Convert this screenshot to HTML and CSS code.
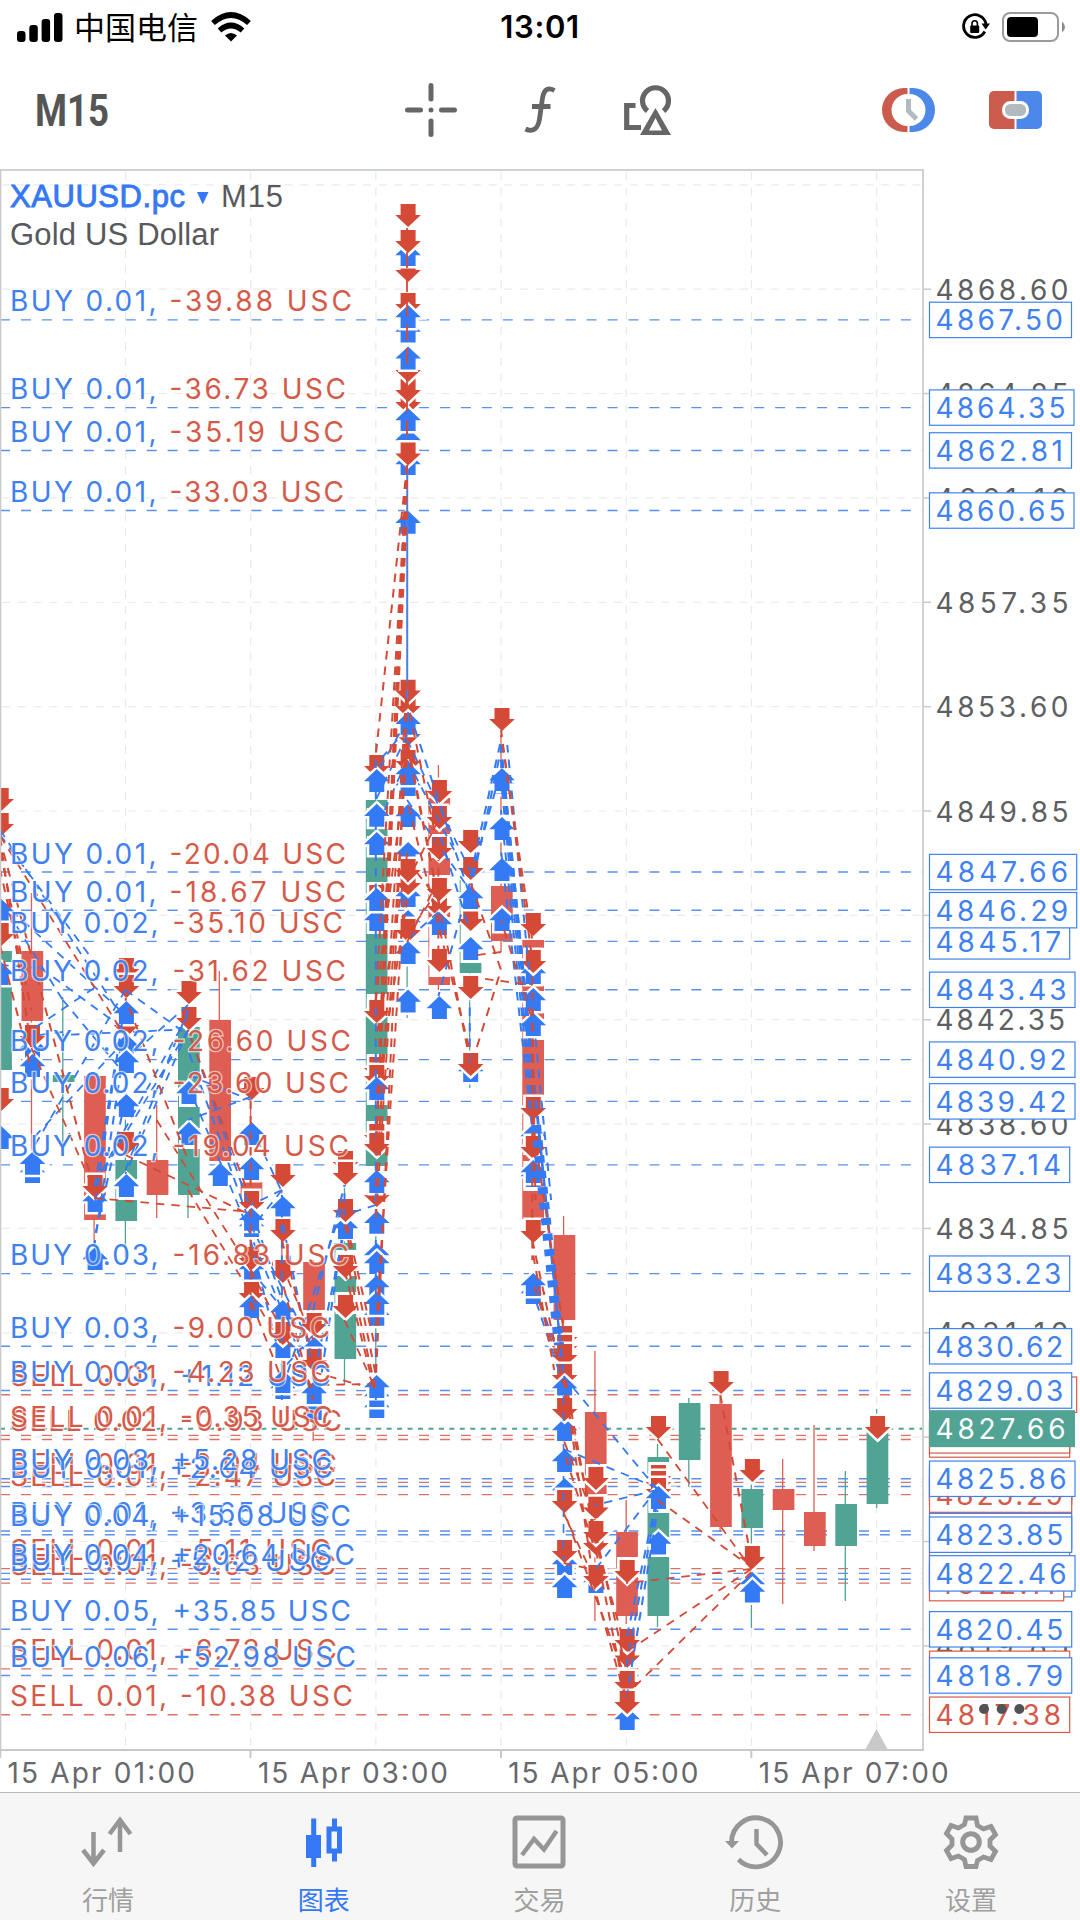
FILE: index.html
```html
<!DOCTYPE html>
<html lang="zh-CN">
<head>
<meta charset="utf-8">
<title>XAUUSD.pc M15</title>
<link rel="stylesheet" href="styles.css">
</head>
<body>
<div class="app">
  <header class="status">
    <div class="status-left">
      <svg width="46" height="30" viewBox="0 0 46 30"><rect x="0" y="19" width="8.5" height="11" rx="3"/><rect x="12.3" y="13" width="8.5" height="17" rx="3"/><rect x="24.6" y="7" width="8.5" height="23" rx="3"/><rect x="37" y="1" width="8.5" height="29" rx="3"/></svg>
      <span class="carrier">中国电信</span>
      <svg width="40" height="30" viewBox="0 0 40 30"><g fill="none" stroke="#000" stroke-width="5.6"><path d="M2 11Q20 -5 38 11"/><path d="M8.5 18.5Q20 8.500 31.500 18.500"/></g><path d="M14 23.500Q20 18.500 26 23.500L20 29.500Z"/></svg>
    </div>
    <span class="clock">13:01</span>
    <div class="status-right">
      <svg width="28" height="28" viewBox="0 0 28 28"><path d="M22.800 18.500A11.300 11.300 0 1 1 24 11" fill="none" stroke="#000" stroke-width="2.800"/><path d="M19.500 10.500H28L23.700 16.500Z"/><rect x="8.200" y="12.500" width="9" height="7.500" rx="1"/><path d="M10 13V10.500a2.700 2.700 0 0 1 5.400 0V13" fill="none" stroke="#000" stroke-width="1.600"/></svg>
      <svg width="64" height="30" viewBox="0 0 64 30"><rect x="1" y="1" width="55" height="28" rx="7" fill="none" stroke="#9b9b9b" stroke-width="2"/><rect x="5" y="5" width="31" height="20" rx="4"/><path d="M60 9.500q6 5.500 0 11Z" fill="#8a8a8a"/></svg>
    </div>
  </header>
  <nav class="toolbar">
    <svg class="timeframe" width="80" height="60" viewBox="0 0 80 60"><text x="0" y="46" textLength="74" lengthAdjust="spacingAndGlyphs">M15</text></svg>
    <div class="tools">
      <svg width="52" height="54" viewBox="0 0 52 54"><g stroke="#666" stroke-width="5" stroke-linecap="round"><path d="M26 2.500V16M26 38V51.500M2.500 27H15.500M36.500 27H49.500M26 27V27.010"/></g></svg>
      <svg width="32" height="48" viewBox="0 0 32 48"><path d="M30.500 4.500C24 1 20 3 18.500 12L15.500 33C14 43 9 46.500 1.500 43M8 20.500H26.500" fill="none" stroke="#666" stroke-width="4.800"/></svg>
      <svg width="48" height="52" viewBox="-1 0 48 52"><g fill="none" stroke="#666" stroke-width="5.200"><path d="M23.500 27A13 13 0 1 1 39.500 27"/><path d="M11.500 21.500H2.700V43.500H17"/></g><path fill="#666" fill-rule="evenodd" d="M31.500 24L47 51H16Z M31.500 34L25 46.500H38Z"/></svg>
    </div>
    <div class="trade">
      <svg width="53" height="44" viewBox="0 0 53 44"><path d="M25.500 0H22A22 22 0 0 0 22 44H25.500V38A16 16 0 0 1 25.500 6Z" fill="#cb5b4d"/><path d="M27.500 0H31A22 22 0 0 1 31 44H27.500V38A16 16 0 0 0 27.500 6Z" fill="#4b88e9"/><path d="M26.500 11V23L34.500 31" fill="none" stroke="#b0babf" stroke-width="5"/></svg>
      <svg width="53" height="38" viewBox="0 0 53 38"><path d="M5 0H25.500V38H5a5 5 0 0 1-5-5V5a5 5 0 0 1 5-5Z" fill="#cb5b4d"/><path d="M27.500 0H48a5 5 0 0 1 5 5V33a5 5 0 0 1-5 5H27.500Z" fill="#4b88e9"/><rect x="14.500" y="11.500" width="24" height="15" rx="7" fill="#b0babf" stroke="#fff" stroke-width="3"/></svg>
    </div>
  </nav>
  <main class="chart">
    <svg id="chart" width="1080" height="1626" viewBox="0 166 1080 1626"></svg>
  </main>
  <footer class="tabs">
    <div class="tab"><svg viewBox="0 0 54 54"><path d="M12.500 17V47M2 35L12.500 48.500L23 35M39 37V6M28.500 19L39 5L49.500 19" fill="none" stroke="currentColor" stroke-width="4.500"/></svg><span>行情</span></div>
    <div class="tab on"><svg viewBox="0 0 54 54"><path d="M9 20H24V43H9ZM14.200 3.500h5V52h-5ZM35 3.500h5V12h-5ZM35 38h5v8.500h-5Z" fill="currentColor"/><rect x="32" y="14" width="10.500" height="22" fill="none" stroke="currentColor" stroke-width="5"/></svg><span>图表</span></div>
    <div class="tab"><svg viewBox="0 0 54 54"><rect x="3" y="3" width="48" height="48" rx="2" fill="none" stroke="currentColor" stroke-width="5"/><path d="M10 40L22 24L32 34.500L44.500 16" fill="none" stroke="currentColor" stroke-width="4.500"/></svg><span>交易</span></div>
    <div class="tab"><svg viewBox="2 0 54 54"><path d="M5.500 27A24.500 24.500 0 1 1 12.500 44.500" fill="none" stroke="currentColor" stroke-width="4.800"/><path d="M-1 26H13L6 33.500Z" fill="currentColor"/><path d="M30.500 14V29L41 40" fill="none" stroke="currentColor" stroke-width="4.500"/></svg><span>历史</span></div>
    <div class="tab"><svg viewBox="0 0 54 54"><path d="M22 3h10l1.500 7.500 6 3.500 7.500-2.500 4.500 8-5.500 5.500v6l5.500 5.500-4.500 8-7.500-2.500-6 3.500L32 51.500H22L20.500 44.500l-6-3.500L7 43.500l-4.500-8L8 30v-6L2.500 18.500l4.500-8 7.500 2.500 6-3.500Z" fill="none" stroke="currentColor" stroke-width="4.800"/><circle cx="27" cy="27" r="8.300" fill="none" stroke="currentColor" stroke-width="5"/></svg><span>设置</span></div>
  </footer>
</div>
<script src="chart.js"></script>
</body>
</html>
```
FILE: styles.css
```css
* { box-sizing: border-box; }
body { margin: 0; background: #fff; font-family: Inter, "Noto Sans CJK SC", sans-serif; }
.app { width: 1080px; height: 1920px; display: flex; flex-direction: column; overflow: hidden; }
.status { height: 54px; padding: 0 17px; display: grid; grid-template-columns: 1fr auto 1fr; align-items: center; }
.status svg { display: block; }
.status-left { display: flex; align-items: center; gap: 11px; }
.carrier { font: 31px/40px "Noto Sans CJK SC", sans-serif; width: 126px; white-space: nowrap; margin-top: -3px; }
.clock { font: 600 31px/40px Inter, sans-serif; letter-spacing: 0.6px; }
.status-right { display: flex; justify-content: flex-end; align-items: center; gap: 12px; }
.status-right svg:last-child { margin-right: -3px; }
.toolbar { height: 112px; padding: 0 38px 1px 35px; display: grid; grid-template-columns: 1fr auto 1fr; align-items: center; }
.toolbar svg { display: block; overflow: visible; }
.timeframe text { font: 700 44px Roboto, sans-serif; fill: #555; }
.tools { display: flex; align-items: center; gap: 67px; padding-right: 1px; }
.trade { display: flex; align-items: center; justify-content: flex-end; gap: 54px; }
.chart { height: 1626px; }
.chart svg { display: block; }
.chart text { font-family: Inter, sans-serif; font-size: 28px; }
.chart .symbol { font-family: "Liberation Sans", sans-serif; font-size: 31px; fill: #58595d; }
.chart .name { fill: #3478f6; stroke: #3478f6; stroke-width: .9px; }
.halo { paint-order: stroke; stroke: #fff; stroke-width: 2.5px; stroke-opacity: .65; }
.tabs { height: 128px; border-top: 1px solid #bbb; background: #f6f6f6; display: flex; padding-right: 1px; }
.tab { flex: 1; display: flex; flex-direction: column; align-items: center; padding-top: 22px; gap: 12px; color: #969696; }
.tab svg { width: 54px; height: 54px; overflow: visible; }
.tab span { font: 26px/36px "Noto Sans CJK SC", sans-serif; color: #a0a0a0; }
.tab.on, .tab.on span { color: #3478f6; }
```
FILE: chart.js
```js
const BLUE = '#347af4', RED = '#d44a36', UP = '#51a394', DOWN = '#df5e54';
const svg = document.getElementById('chart');
const out = [];
const priceY = p => 289.3 + (4868.6 - p) * 27.83;
const colX = k => 0.2 + 31.3 * k;
const line = (x1, y1, x2, y2, c, w, dash, offset) =>
  out.push(`<line x1="${x1}" y1="${y1}" x2="${x2}" y2="${y2}" stroke="${c}" stroke-width="${w}"${dash ? ` stroke-dasharray="${dash}"` : ''}${offset ? ` stroke-dashoffset="${offset}"` : ''}/>`);
const rect = (x, y, w, h, attrs) => out.push(`<rect x="${x}" y="${y}" width="${w}" height="${h}" ${attrs}/>`);
const text = (x, y, s, c, end, cls = '') =>
  out.push(`<text x="${x}" y="${y}" fill="${c}" class="${cls}"${end ? ` textLength="${end - x}"` : ''}>${s}</text>`);

// grid
for (let i = 1; i < 8; i++) line(125.2 * i + .3, 172, 125.2 * i + .3, 1749, '#e3ebee', 1.2, '8 7.500');
for (let i = -1; i < 14; i++) {
  const y = 289.2 + 104.36 * i;
  line(2, y, 922, y, '#e8eded', 1.2, '8 7.700');
}

// order levels: side, volume, price, profit, text end, right edge of the price box
const levels = [
  ['B', '0.01', 4867.50, '-39.88', 352, 1071.5], ['B', '0.01', 4864.35, '-36.73', 346, 1074],
  ['B', '0.01', 4862.81, '-35.19', 344, 1071.5], ['B', '0.01', 4860.65, '-33.03', 344, 1074],
  ['B', '0.01', 4847.66, '-20.04', 346, 1076.7], ['B', '0.02', 4845.17, '-35.10', 343, 1069.7],
  ['B', '0.01', 4846.29, '-18.67', 346, 1076.7], ['B', '0.02', 4843.43, '-31.62', 346, 1075],
  ['B', '0.02', 4840.92, '-26.60', 351, 1075], ['B', '0.02', 4839.42, '-23.60', 349, 1075],
  ['B', '0.02', 4837.14, '-19.04', 349, 1069.7], ['B', '0.03', 4833.23, '-16.83', 349, 1069.7],
  ['B', '0.03', 4830.62, '-9.00', 330, 1071.7],
  ['S', '0.01', 4828.88, '+1.12', 331, 1076.7], ['B', '0.03', 4829.03, '-4.23', 331, 1071.7],
  ['S', '0.02', 4827.27, '-0.93', 342, 1069.7], ['S', '0.01', 4827.42, '-0.35', 333, 1069.7],
  ['S', '0.01', 4825.73, '-2.04', 337, 1071.7], ['S', '0.01', 4825.29, '-2.47', 336, 1071.7],
  ['B', '0.01', 4825.58, '+2.04', 333, 1071.7], ['B', '0.03', 4825.86, '+5.28', 332, 1075],
  ['B', '0.01', 4823.98, '+3.65', 330, 1071.7], ['B', '0.04', 4823.85, '+15.08', 351, 1071.7],
  ['S', '0.01', 4822.63, '-5.11', 331, 1069.7], ['S', '0.01', 4822.11, '-6.63', 336, 1063.7],
  ['B', '0.01', 4822.25, '+5.12', 330, 1071.7], ['B', '0.04', 4822.46, '+20.64', 355, 1075],
  ['B', '0.05', 4820.45, '+35.85', 351, 1071.7],
  ['S', '0.01', 4819.03, '-8.73', 337, 1069.7], ['B', '0.06', 4818.79, '+52.98', 356, 1071.7],
  ['S', '0.01', 4817.38, '-10.38', 353, 1069.7]
];
for (const l of levels) {
  const y = priceY(l[2]);
  line(0, y, 922, y, l[0] === 'B' ? '#5a91ec' : '#dc7265', 1.4, '10 10.950');
}
const last = priceY(4827.66);
line(0, last, 922, last, UP, 2, '5 5.450');

// candles: column, high, body top, body bottom, low, colour, stretches kept clear around deal arrows
const candles = [
  [0, 951, 951, 1070, 1075, UP, [[962, 987]]], [1, 893, 951, 1021, 1150, DOWN], [2, 997, 1075, 1082, 1146, UP],
  [3, 1074, 1076, 1220, 1250, DOWN, [[1200, 1214]]], [4, 1000, 1160, 1221, 1257, UP, [[1179, 1200]]],
  [5, 1105, 1160, 1195, 1218, DOWN],
  [6, 1005, 1027, 1195, 1218, UP, [[1088, 1107], [1128, 1149]]], [7, 971, 1020, 1161, 1165, DOWN],
  [8, 1100, 1182, 1202, 1290, DOWN],
  [9, 1190, 1262, 1266, 1380, DOWN], [10, 1260, 1262, 1310, 1441, DOWN],
  [11, 1185, 1243, 1359, 1385, UP, [[1250, 1276], [1292, 1314]]],
  [12, 743, 800, 1166, 1385, UP, [[808, 829], [836, 857], [882, 934], [994, 1017], [1054, 1105], [1121, 1151]]],
  [13, 950, 950, 950, 1018, UP],
  [14, 765, 798, 985, 990, DOWN, [[805, 825], [834, 858], [875, 909], [917, 977]]],
  [15, 860, 880, 973, 1088, UP, [[880, 963]]], [16, 735, 886, 941, 952, DOWN, [[915, 933]]],
  [17, 940, 940, 1219, 1228, DOWN, [[948, 986], [991, 1013], [1019, 1040], [1095, 1155], [1161, 1191]]],
  [18, 1216, 1235, 1320, 1330, DOWN], [19, 1351, 1412, 1494, 1621, DOWN, [[1464, 1485]]],
  [20, 1500, 1532, 1616, 1624, DOWN, [[1557, 1577]]],
  [21, 1444, 1457, 1616, 1627, UP, [[1462, 1513], [1537, 1557]]],
  [22, 1398, 1403, 1460, 1487, UP], [23, 1393, 1404, 1527, 1532, DOWN],
  [24, 1484, 1489, 1528, 1628, UP], [25, 1459, 1489, 1510, 1604, DOWN], [26, 1425, 1512, 1546, 1551, DOWN],
  [27, 1471, 1504, 1546, 1601, UP], [28, 1409, 1431, 1504, 1508, UP]
];
for (const [k, hi, top, bot, lo, c, clear = []] of candles) {
  const x = colX(k);
  line(x, hi, x, lo, c, 1.3);
  if (bot > top) rect(x - 10, top, 21.7, bot - top, `fill="${c}"`);
  for (const [a, b] of clear) rect(x - 9, a, 21.5, b - a, 'fill="#fff"');
}

// deals: column, then signed tips in painting order (negative = sell arrow pointing down)
const deals = {
  0: [-811, -836, 908, 899, -946, 962, -1111, 1126],
  1: [1036, -1048, 1054, 1160, 1151.7],
  3: [1189, -1198, 1247],
  4: [-981, -998, -1037, 1034, 1001, 1050, -1155, 1094, 1174],
  6: [-1004, -1030, 1081, 1122],
  7: [1163],
  8: [-1100, 1122, 1157, -1214, 1214, 1207.7, 1257, -1270, -1305, 1295],
  9: [-1187, 1196, -1242, -1283, 1300, 1335, -1345, 1376, 1370],
  10: [-1336, 1337, 1397, -1372, 1381],
  11: [-1174, -1185, 1216, -1222, -1278, -1318],
  12: [-778, 769, 803.6, 832, -908, 908, 888, -1023, -1080, -1088, 1077, -1147, -1156, -1207, 1170, 1210.7, 1243, 1251, 1275, 1302.6, 1291.6, 1395, 1384, 1375],
  13: [-282, 243, -227, -253, -316, 319.5, 305, -414, -402, -382, 346.3, 428, 408, 452, -465.5, 510.6, -718, -702.7, -746, -773, 711.7, 773, 762, 804, 842, 910, 884, -895, -882, -942, 941, 989.5],
  14: [-803, -829, -860, -918, -901, 912, -972, 996],
  15: [-853, -880, -931, 886, 937, -999, 1059, -1076],
  16: [-731, 771, 768, 817, 858, 908],
  17: [-936, 961, -973, 988, 1013, -1120, 1124, -1159, 1164, 1160, -1243, 1281, 1273],
  18: [-1349, -1358, -1367, -1387, 1376, 1418, -1421, 1478, 1449, -1513, 1552, -1563, 1575],
  19: [-1490, -1519.6, -1555, -1544, 1570, -1588],
  20: [-1583, -1667.6, -1652, -1694, 1707, -1714],
  21: [-1439, -1488, -1494, -1501, 1486, 1531.5],
  23: [-1394],
  24: [-1482, -1569, 1572, 1579.5],
  28: [-1439]
};
for (const k in deals) for (const v of deals[k]) {
  const s = v > 0 ? 1 : -1, t = Math.abs(v) + .1, x = colX(+k) + 1;
  out.push(`<path d="M${x} ${t}L${x + 12.8} ${t + 12.2 * s}H${x + 7.5}V${t + 23 * s}H${x - 7.5}V${t + 12.2 * s}H${x - 12.8}Z" fill="${s > 0 ? BLUE : RED}" stroke="#fff" stroke-width="5" paint-order="stroke"/>`);
}

// position links: [from column, y, to column, y]
const links = {
  [BLUE]: [
    [0, 830, 4, 1022], [0, 835, 3.2, 970], [0, 900, 2, 1000], [2, 1000, 4, 1075], [0, 900, 4, 1015],
    [0, 965, 1.3, 968], [1.3, 968, 4, 1030], [1, 1030, 3, 988], [1, 1036, 2, 1032], [2, 1035, 5.500, 1030],
    [1, 1151, 4, 990], [1, 1140, 4, 1040], [3, 1247, 4, 1040], [3, 1210, 4, 1000], [3, 1240, 4, 1100], [3, 1190, 3.7, 1060],
    [3, 1185, 6, 1015], [3.3, 1170, 6, 1030], [4, 990, 6, 1035], [4, 1060, 6, 1005], [4, 1174, 6, 1030], [4, 1170, 6, 1010],
    [6, 1075, 8, 1100], [6, 1120, 8, 1097], [6, 1030, 8, 1210], [6, 1050, 8, 1225], [6, 1085, 9, 1310], [8, 1125, 9, 1192],
    [8, 1205, 9, 1190], [8, 1230, 9, 1190], [8, 1207, 9, 1300], [8, 1225, 10, 1350], [8, 1240, 9, 1365], [8, 1270, 10, 1345],
    [9, 1195, 9, 1400], [9, 1220, 10, 1370], [9, 1370, 10, 1335], [9, 1390, 11, 1200], [9, 1300, 10, 1400],
    [10, 1380, 11, 1230], [10, 1310, 11, 1185], [10, 1430, 11, 1220], [11, 1215, 12, 1205], [11, 1185, 11, 1225],
    [12, 760, 12, 1400], [12, 775, 13, 720], [12, 765, 13, 728], [12, 800, 13, 735], [12, 830, 13, 760],
    [13, 705, 15, 895], [13, 740, 15, 870], [13, 760, 14.500, 850], [13, 800, 15, 890], [13, 940, 14, 912], [14, 996, 16, 770],
    [14, 830, 15, 930], [15, 880, 16, 740], [15, 895, 16, 750], [15, 1070, 15, 1000],
    [16, 745, 17, 1060], [16, 760, 17, 1080], [16, 780, 17, 1100], [16, 810, 17, 1115], [16, 850, 17, 1130],
    [16, 745, 18, 1376], [16, 765, 18, 1376], [16.200, 745, 17.600, 1200],
    [17, 1280, 18, 1370], [17, 1290, 18, 1385], [18, 1376, 21, 1490], [18, 1449, 21, 1488],
    [19, 1505, 21, 1490], [19, 1570, 21, 1488], [20, 1667, 21, 1500], [20, 1700, 21, 1510], [20, 1640, 21, 1495]
  ],
  [RED]: [
    [0, 836, 4, 1037], [0, 840, 1, 1050], [0, 850, .7, 960], [0, 870, 1, 1010], [0, 946, 1, 1070], [0, 840, 3, 1190],
    [1, 1048, 3, 1190], [4, 998, 6, 1160], [4, 1155, 8, 1215], [3, 1198, 8, 1212], [6, 1030, 8, 1200], [5, 1120, 8, 1270],
    [6, 1190, 9, 1345], [8, 1270, 10, 1390], [8, 1300, 9, 1380], [8, 1100, 8, 1320], [9, 1240, 10, 1360], [9, 1280, 10, 1400], [9, 1265, 10, 1340],
    [10, 1385, 12, 1384], [10, 1372, 11.500, 1385], [11, 1222, 12, 1375], [11, 1250, 12, 1390], [11, 1270, 12, 1395], [11, 1320, 12, 1390], [11, 1215, 12, 1350],
    [12, 755, 13, 465], [12, 1150, 13, 465], [12, 1155, 13, 510], [12, 1190, 13, 680], [12, 1220, 13, 740], [12, 1330, 13, 850],
    [12, 1380, 13, 700], [12.100, 1050, 13, 460], [12.200, 980, 13, 480], [12, 1000, 13, 465], [12, 1000, 13, 760],
    [12, 1100, 13, 900], [12, 1040, 13, 860], [13, 860, 14, 900], [13, 700, 14, 850], [13, 745, 14, 900],
    [13, 882, 14, 820], [13, 935, 14, 890], [13, 942, 14, 880], [13, 740, 15, 1060], [13, 800, 15, 1050], [14, 860, 14, 972],
    [15, 880, 16, 970], [16, 970, 15, 1070], [15, 956, 16, 952], [15, 977, 17, 985],
    [16, 730, 17, 960], [16, 735, 17, 940], [16, 920, 17, 1020],
    [17, 960, 17, 1260], [17, 1010, 17.100, 1200], [17, 1240, 18, 1385], [17, 1280, 18, 1380], [17, 1120, 18, 1330],
    [17, 1250, 17.700, 1370], [18, 1370, 19, 1540], [18, 1376, 19, 1590], [18, 1450, 19, 1550], [18, 1513, 19, 1580], [18, 1440, 19, 1520],
    [18, 1563, 19, 1570], [18, 1390, 20, 1670], [18, 1510, 20, 1680], [19, 1540, 20, 1650], [19, 1590, 20, 1700], [19, 1545, 20, 1700],
    [20, 1583, 24, 1569], [20, 1652, 24, 1569], [20, 1695, 24, 1572], [21, 1439, 24, 1569], [21, 1500, 24, 1567], [23, 1394, 24, 1560]
  ]
};
line(407.2, 470, 407.2, 700, '#4a7fe6', 2);
line(407, 228, 407, 460, RED, 1.8, '16 8');
line(563.5, 1380, 563.5, 1560, BLUE, 1.6, '9 7');
// steep links share one dash rhythm along the price axis
const link = (x1, y1, x2, y2, c) => {
  if (y2 < y1) [x1, y1, x2, y2] = [x2, y2, x1, y1];
  const dx = x2 - x1, dy = y2 - y1, s = Math.hypot(dx, dy) / dy;
  if (dy > 2.5 * Math.abs(dx)) line(x1, y1, x2, y2, c, 2, `${8.5 * s} ${7 * s}`, ((y1 % 15.5) * s).toFixed(2));
  else line(x1, y1, x2, y2, c, 1.8, '8.500 7');
};
for (const c in links)
  for (const [a, y1, b, y2] of links[c]) link(colX(a), y1, colX(b), y2, c);
line(536, 1125, 559, 1345, BLUE, 10, '7 8.600');

// level captions
for (const [side, vol, p, profit, end] of levels) {
  const y = priceY(p) - 8.5, c = side === 'B' ? '#3f82ef' : '#d55a49';
  const wide = side === 'B';
  text(10, y, (wide ? 'BUY ' : 'SELL ') + vol + ',', c, wide ? (vol === '0.01' ? 156.5 : 158.5) : 167, 'halo');
  text(wide ? (vol === '0.01' ? 169.5 : 172.5) : 180, y, profit + ' USC', profit[0] === '+' ? '#3f82ef' : '#d55a49', end, 'halo');
}

// frame and axes
line(0, 170, 924, 170, '#cfd2d4', 2);
line(923, 170, 923, 1751, '#cfd2d4', 2);
line(.5, 170, .5, 1758, '#c8c8c8', 1.5);
line(0, 1750, 924, 1750, '#c9c9c9', 2);
for (const x of [250.5, 501, 751.3]) line(x, 1750, x, 1758, '#c9c9c9', 2);
out.push('<path d="M876.500 1729L888 1750H865Z" fill="#c9c9c9"/>');
['01', '03', '05', '07'].forEach((h, i) => text(7.5 + 250.4 * i, 1783, `15 Apr ${h}:00`, '#66686c', (i ? 197.5 : 195) + 250.4 * i));
for (let i = 0; i < 14; i++) {
  const y = 289.2 + 104.36 * i;
  line(924, y, 931, y, '#c9c9c9', 1.5);
  text(935.5, y + 10.6, (4868.6 - 3.75 * i).toFixed(2), '#5d5f62', i === 7 ? 1065 : 1068.5);
}
const rank = l => l[2] === 4825.58 || l[2] === 4822.25 ? 0 : l[0] === 'S' ? 1 : 2;
const boxes = levels.slice().sort((a, b) => rank(a) - rank(b));
for (const [side, , p, , , r] of boxes) {
  const y = priceY(p), c = side === 'B' ? '#3f82ef' : '#d55a49';
  rect(929.5, y - 17.7, r - 929.5, 35.4, `fill="#fff" stroke="${c}" stroke-width="1.200"`);
  text(935.5, y + 10.4, p.toFixed(2), c, r - 8.5);
}
rect(929, last - 18.5, 146, 37, `fill="${UP}"`);
text(935.5, last + 10.4, '4827.66', '#fff', 1065.5);
for (const x of [984, 1001.7, 1019.3]) out.push(`<circle cx="${x}" cy="1709" r="5" fill="#505257"/>`);

// symbol title
text(10, 206.500, 'XAUUSD.pc', '#3478f6', 185, 'symbol name');
out.push('<path d="M197 192H208.500L202.800 204.500Z" fill="#3478f6"/>');
text(221, 206.500, 'M15', '#58595d', 283, 'symbol');
text(10, 245, 'Gold US Dollar', '#58595d', 219, 'symbol');

svg.innerHTML = out.join('');
```
